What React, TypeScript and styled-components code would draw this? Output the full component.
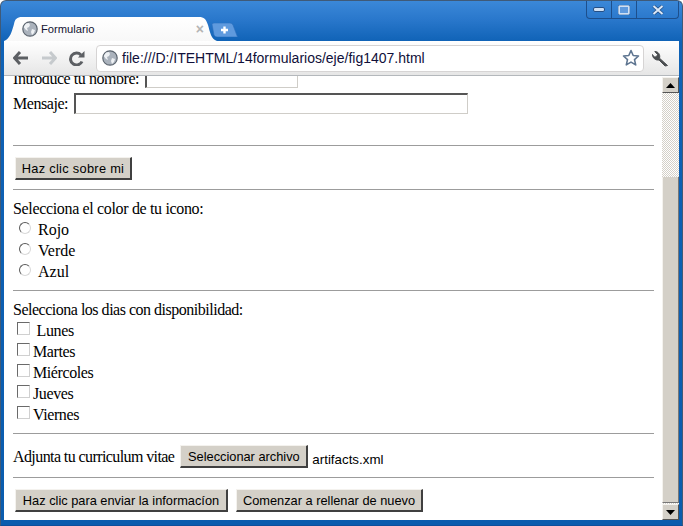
import React from 'react';
import styled, { createGlobalStyle } from 'styled-components';

const GlobalStyle = createGlobalStyle`
  html, body {
    margin: 0;
    padding: 0;
    background: #fff;
  }
`;

const Window = styled.div`
  width: 683px;
  height: 526px;
  box-sizing: border-box;
  display: flex;
  flex-direction: column;
  overflow: hidden;
  border-radius: 6px 6px 0 0;
  border: 1px solid #3f5a78;
  border-bottom-color: #0d4f9c;
  background: linear-gradient(#3b88d8 0, #2a78cc 18px, #0f62b6 41px, #0a5cae 100%);
`;

const TitleBar = styled.div`
  height: 40px;
  flex: none;
  display: flex;
  align-items: flex-end;
`;

const Tab = styled.div`
  position: relative;
  width: 213px;
  height: 24px;
  margin-left: 3px;
  flex: none;
  display: flex;
  align-items: center;
  padding: 0 13px 0 18px;
  box-sizing: border-box;
  font: 11.2px "Liberation Sans", Arial, sans-serif;
  color: #141432;

  > * {
    position: relative;
  }
`;

const TabShape = styled.svg`
  position: absolute !important;
  left: 0;
  top: 0;
`;

const TabTitle = styled.span`
  margin-left: 3px;
  flex: 1;
`;

const TabClose = styled.span`
  color: #b4b4b4;
  font-size: 14px;
  font-weight: bold;
`;

const NewTab = styled.svg`
  margin: 0 0 4px -5px;
  flex: none;
`;

const Caption = styled.div`
  margin: 0 3px auto auto;
  display: flex;
  height: 17px;
  border: 1px solid #1d4f8c;
  border-top: none;
  border-radius: 0 0 4px 4px;
`;

const CaptionButton = styled.div<{ $w: number }>`
  width: ${(p) => p.$w}px;
  display: flex;
  align-items: center;
  justify-content: center;
  & + & {
    border-left: 1px solid #1d4f8c;
  }
`;

const Toolbar = styled.div`
  height: 35px;
  flex: none;
  margin: 0 3px;
  display: flex;
  align-items: center;
  background: linear-gradient(#fff, #e6e6e6);
  border-bottom: 1px solid #b4b8bc;
  box-sizing: border-box;
`;

const NavButton = styled.div<{ $w: number }>`
  width: ${(p) => p.$w}px;
  flex: none;
  display: flex;
  justify-content: center;
`;

const Omnibox = styled.div`
  width: 548px;
  height: 27px;
  margin-left: 2px;
  flex: none;
  box-sizing: border-box;
  display: flex;
  align-items: center;
  gap: 4px;
  padding: 0 3px 0 5px;
  background: #fff;
  border: 1px solid #d6d4d4;
  border-radius: 4px;
  font: 14px "Liberation Sans", Arial, sans-serif;
  color: #10103a;
`;

const Url = styled.span`
  flex: 1;
`;

const Viewport = styled.div`
  flex: 1;
  min-height: 0;
  margin: 0 3px 5px;
  display: flex;
  background: #fff;
`;

const Page = styled.div`
  flex: 1;
  min-width: 0;
  overflow: hidden;
  padding: 0 8px 0 9px;
  font: 16px "Liberation Serif", "Times New Roman", serif;
  color: #000;
`;

const Form = styled.form`
  margin-top: -8px;
  display: flex;
  flex-direction: column;
`;

const Row = styled.div<{ $h?: number; $track?: number }>`
  height: ${(p) => p.$h ?? 21}px;
  display: flex;
  align-items: center;
  white-space: nowrap;
  letter-spacing: ${(p) => p.$track ?? -0.45}px;
`;

const TextField = styled.input<{ $w: number; $first?: boolean }>`
  width: ${(p) => p.$w}px;
  height: ${(p) => (p.$first ? 19 : 21)}px;
  margin-left: 6px;
  box-sizing: border-box;
  padding: 0 2px;
  background: #fff;
  border: 1px solid #cfcdc8;
  border-top: 2px solid #555;
  border-left: 2px solid #555;
  outline: none;
`;

const Rule = styled.hr<{ $top: number; $bottom: number }>`
  width: 100%;
  height: 1px;
  flex: none;
  margin: ${(p) => p.$top}px 0 ${(p) => p.$bottom}px;
  border: none;
  background: #9c9c9c;
`;

const Btn = styled.button<{ $w: number; $gap?: number; $track?: number }>`
  width: ${(p) => p.$w}px;
  height: 23px;
  margin-left: ${(p) => p.$gap ?? 2}px;
  padding: 0;
  box-sizing: border-box;
  background: #d4d0c8;
  border: none;
  border-top: 1px solid #f4f2ee;
  border-left: 1px solid #f4f2ee;
  border-right: 2px solid #404040;
  border-bottom: 2px solid #404040;
  border-radius: 0;
  font: 12.8px "Liberation Sans", Arial, sans-serif;
  letter-spacing: ${(p) => p.$track ?? 0}px;
  color: #000;
  white-space: nowrap;
`;

const ChoiceLabel = styled.label<{ $gap: number }>`
  display: flex;
  align-items: center;
  gap: ${(p) => p.$gap}px;
`;

const Radio = styled.input`
  appearance: none;
  width: 12px;
  height: 12px;
  margin: -4px 0 0 6px;
  border-radius: 50%;
  border: 1px solid;
  border-color: #5a5a5a #d8d8d8 #d8d8d8 #5a5a5a;
  background: #fff;
  flex: none;
`;

const Checkbox = styled.input`
  appearance: none;
  width: 13px;
  height: 13px;
  box-sizing: border-box;
  margin: -4px 0 0 4px;
  border: 1px solid;
  border-color: #6a6a6a #d0d0d0 #d0d0d0 #6a6a6a;
  background: #fff;
  flex: none;
`;

const FileName = styled.span`
  margin: 5px 0 0 4px;
  font: 13.33px "Liberation Sans", Arial, sans-serif;
  letter-spacing: 0;
`;

const Scrollbar = styled.div`
  width: 17px;
  flex: none;
  display: flex;
  flex-direction: column;
  margin-top: 1px;
  background: repeating-conic-gradient(#d4d0c8 0 25%, #fff 0 50%) 0 0 / 2px 2px;
`;

const ScrollButton = styled.div`
  height: 16px;
  flex: none;
  display: flex;
  align-items: center;
  justify-content: center;
  background: #d4d0c8;
  border: 1px solid;
  border-color: #f4f2ee #555 #555 #f4f2ee;
  box-sizing: border-box;
`;

const ScrollThumb = styled.div`
  height: 326px;
  margin-top: 84px;
  flex: none;
  background: #d4d0c8;
  border-left: 1px solid #f4f2ee;
  border-right: 1px solid #777;
  border-bottom: 1px solid #777;
  box-sizing: border-box;
`;

const Spacer = styled.div`
  flex: 1;
`;

const Globe: React.FC = () => (
  <svg width="16" height="16" viewBox="0 0 16 16">
    <circle cx="8" cy="8" r="7.2" fill="#aab2bc" stroke="#5d6670" strokeWidth="1.2" />
    <path d="M4 2.6l3-.6 1 2-1 2-2 1 1 3-2-1-2.4-3zM10 8l3 1-1 3-2 2-1-3z" fill="#eef1f4" />
  </svg>
);

const days = ['\u00A0Lunes', 'Martes', 'Miércoles', 'Jueves', 'Viernes'];

const App: React.FC = () => {
  return (
    <>
      <GlobalStyle />
      <Window>
        <TitleBar>
          <Tab>
            <TabShape width="213" height="24" viewBox="0 0 213 24">
              <defs>
                <linearGradient id="tabFill" x1="0" y1="0" x2="0" y2="1">
                  <stop offset="0" stopColor="#ffffff" />
                  <stop offset="1" stopColor="#f8f8f8" />
                </linearGradient>
              </defs>
              <path
                d="M0 24C6 22 8 14 10 7C11 2 13 0 18 0H195C200 0 202 2 204 8C206 15 207 22 213 24Z"
                fill="url(#tabFill)"
              />
            </TabShape>
            <Globe />
            <TabTitle>Formulario</TabTitle>
            <TabClose>×</TabClose>
          </Tab>
          <NewTab width="26" height="14" viewBox="0 0 26 14">
            <path d="M0 1.5Q0 0 2 0H18Q20 0 21 2L25.5 14H5Q3 14 2 12Z" fill="#5f9ade" stroke="#2b6fbd" strokeWidth="0.6" />
            <path d="M12.5 3.5v7M9 7h7" stroke="#fff" strokeWidth="2.4" />
          </NewTab>
          <Caption>
            <CaptionButton $w={24}>
              <svg width="12" height="5" viewBox="0 0 12 5">
                <rect x="0.5" y="0.5" width="11" height="4" rx="1.5" fill="#cfe0f4" stroke="#244f86" />
              </svg>
            </CaptionButton>
            <CaptionButton $w={24}>
              <svg width="12" height="10" viewBox="0 0 12 10">
                <rect x="1" y="1" width="10" height="8" rx="1" fill="#5f9ade" stroke="#cfe0f4" strokeWidth="2" />
                <rect x="0" y="0" width="12" height="10" rx="1.5" fill="none" stroke="#244f86" strokeWidth="0.6" />
              </svg>
            </CaptionButton>
            <CaptionButton $w={41}>
              <svg width="12" height="10" viewBox="0 0 12 10">
                <path d="M1.5 1l9 8M10.5 1l-9 8" stroke="#244f86" strokeWidth="3.4" />
                <path d="M1.5 1l9 8M10.5 1l-9 8" stroke="#dbe8f7" strokeWidth="2" />
              </svg>
            </CaptionButton>
          </Caption>
        </TitleBar>
        <Toolbar>
          <NavButton $w={34}>
            <svg width="16" height="14" viewBox="0 0 16 14">
              <path d="M7 1L1.5 7 7 13M2 7h13" fill="none" stroke="#5c5f63" strokeWidth="3" />
            </svg>
          </NavButton>
          <NavButton $w={22}>
            <svg width="16" height="14" viewBox="0 0 16 14">
              <path d="M9 1l5.5 6L9 13M14 7H1" fill="none" stroke="#c6cacd" strokeWidth="3" />
            </svg>
          </NavButton>
          <NavButton $w={34}>
            <svg width="16" height="15" viewBox="0 0 16 15">
              <path d="M13 10.5A6 6 0 1 1 12 4" fill="none" stroke="#5c5f63" strokeWidth="3" />
              <path d="M9 6.5h6.5V0z" fill="#5c5f63" />
            </svg>
          </NavButton>
          <Omnibox>
            <Globe />
            <Url>file:///D:/ITEHTML/14formularios/eje/fig1407.html</Url>
            <svg width="18" height="18" viewBox="0 0 18 18">
              <path
                d="M9 1.5l2.2 5 5.3.5-4 3.6 1.2 5.3L9 13.1l-4.7 2.8 1.2-5.3-4-3.6 5.3-.5z"
                fill="#fff"
                stroke="#5f7691"
                strokeWidth="1.6"
                strokeLinejoin="round"
              />
            </svg>
          </Omnibox>
          <NavButton $w={32}>
            <svg width="17" height="17" viewBox="0 0 17 17">
              <path
                d="M15.5 15.5L7.5 8.2C8.5 5 6.5 1.5 2.8 1.5L5.5 4.5 4.5 6.8 2 7 0.5 4.5C0.5 8 3.5 10.5 7 10l6 6z"
                fill="#4a4d50"
                stroke="#4a4d50"
              />
            </svg>
          </NavButton>
        </Toolbar>
        <Viewport>
          <Page>
            <Form onSubmit={(e) => e.preventDefault()}>
              <Row $h={21}>
                Introduce tu nombre:
                <TextField $w={153} $first />
              </Row>
              <Row $h={29}>
                Mensaje:
                <TextField $w={394} />
              </Row>
              <Rule $top={27} $bottom={11} />
              <Row $h={23}>
                <Btn type="button" $w={117} $track={0.3}>Haz clic sobre mi</Btn>
              </Row>
              <Rule $top={9} $bottom={9} />
              <Row $h={20} $track={-0.34}>Selecciona el color de tu icono:</Row>
              {['Rojo', 'Verde', 'Azul'].map((color) => (
                <Row key={color} $track={0}>
                  <ChoiceLabel $gap={7}>
                    <Radio type="radio" name="color" />
                    {color}
                  </ChoiceLabel>
                </Row>
              ))}
              <Rule $top={8} $bottom={9} />
              <Row $h={20} $track={-0.49}>Selecciona los dias con disponibilidad:</Row>
              {days.map((day) => (
                <Row key={day} $track={-0.4}>
                  <ChoiceLabel $gap={3}>
                    <Checkbox type="checkbox" />
                    {day}
                  </ChoiceLabel>
                </Row>
              ))}
              <Rule $top={8} $bottom={11} />
              <Row $h={23} $track={-0.59}>
                Adjunta tu curriculum vitae
                <Btn type="button" $w={128} $gap={6}>
                  Seleccionar archivo
                </Btn>
                <FileName>artifacts.xml</FileName>
              </Row>
              <Rule $top={9} $bottom={11} />
              <Row $h={23}>
                <Btn type="submit" $w={213}>Haz clic para enviar la informacíon</Btn>
                <Btn type="reset" $w={187} $gap={8}>
                  Comenzar a rellenar de nuevo
                </Btn>
              </Row>
            </Form>
          </Page>
          <Scrollbar>
            <ScrollButton>
              <svg width="9" height="5" viewBox="0 0 9 5">
                <path d="M4.5 0L9 5H0z" fill="#000" />
              </svg>
            </ScrollButton>
            <ScrollThumb />
            <Spacer />
            <ScrollButton>
              <svg width="9" height="5" viewBox="0 0 9 5">
                <path d="M0 0h9L4.5 5z" fill="#000" />
              </svg>
            </ScrollButton>
          </Scrollbar>
        </Viewport>
      </Window>
    </>
  );
};

export default App;
